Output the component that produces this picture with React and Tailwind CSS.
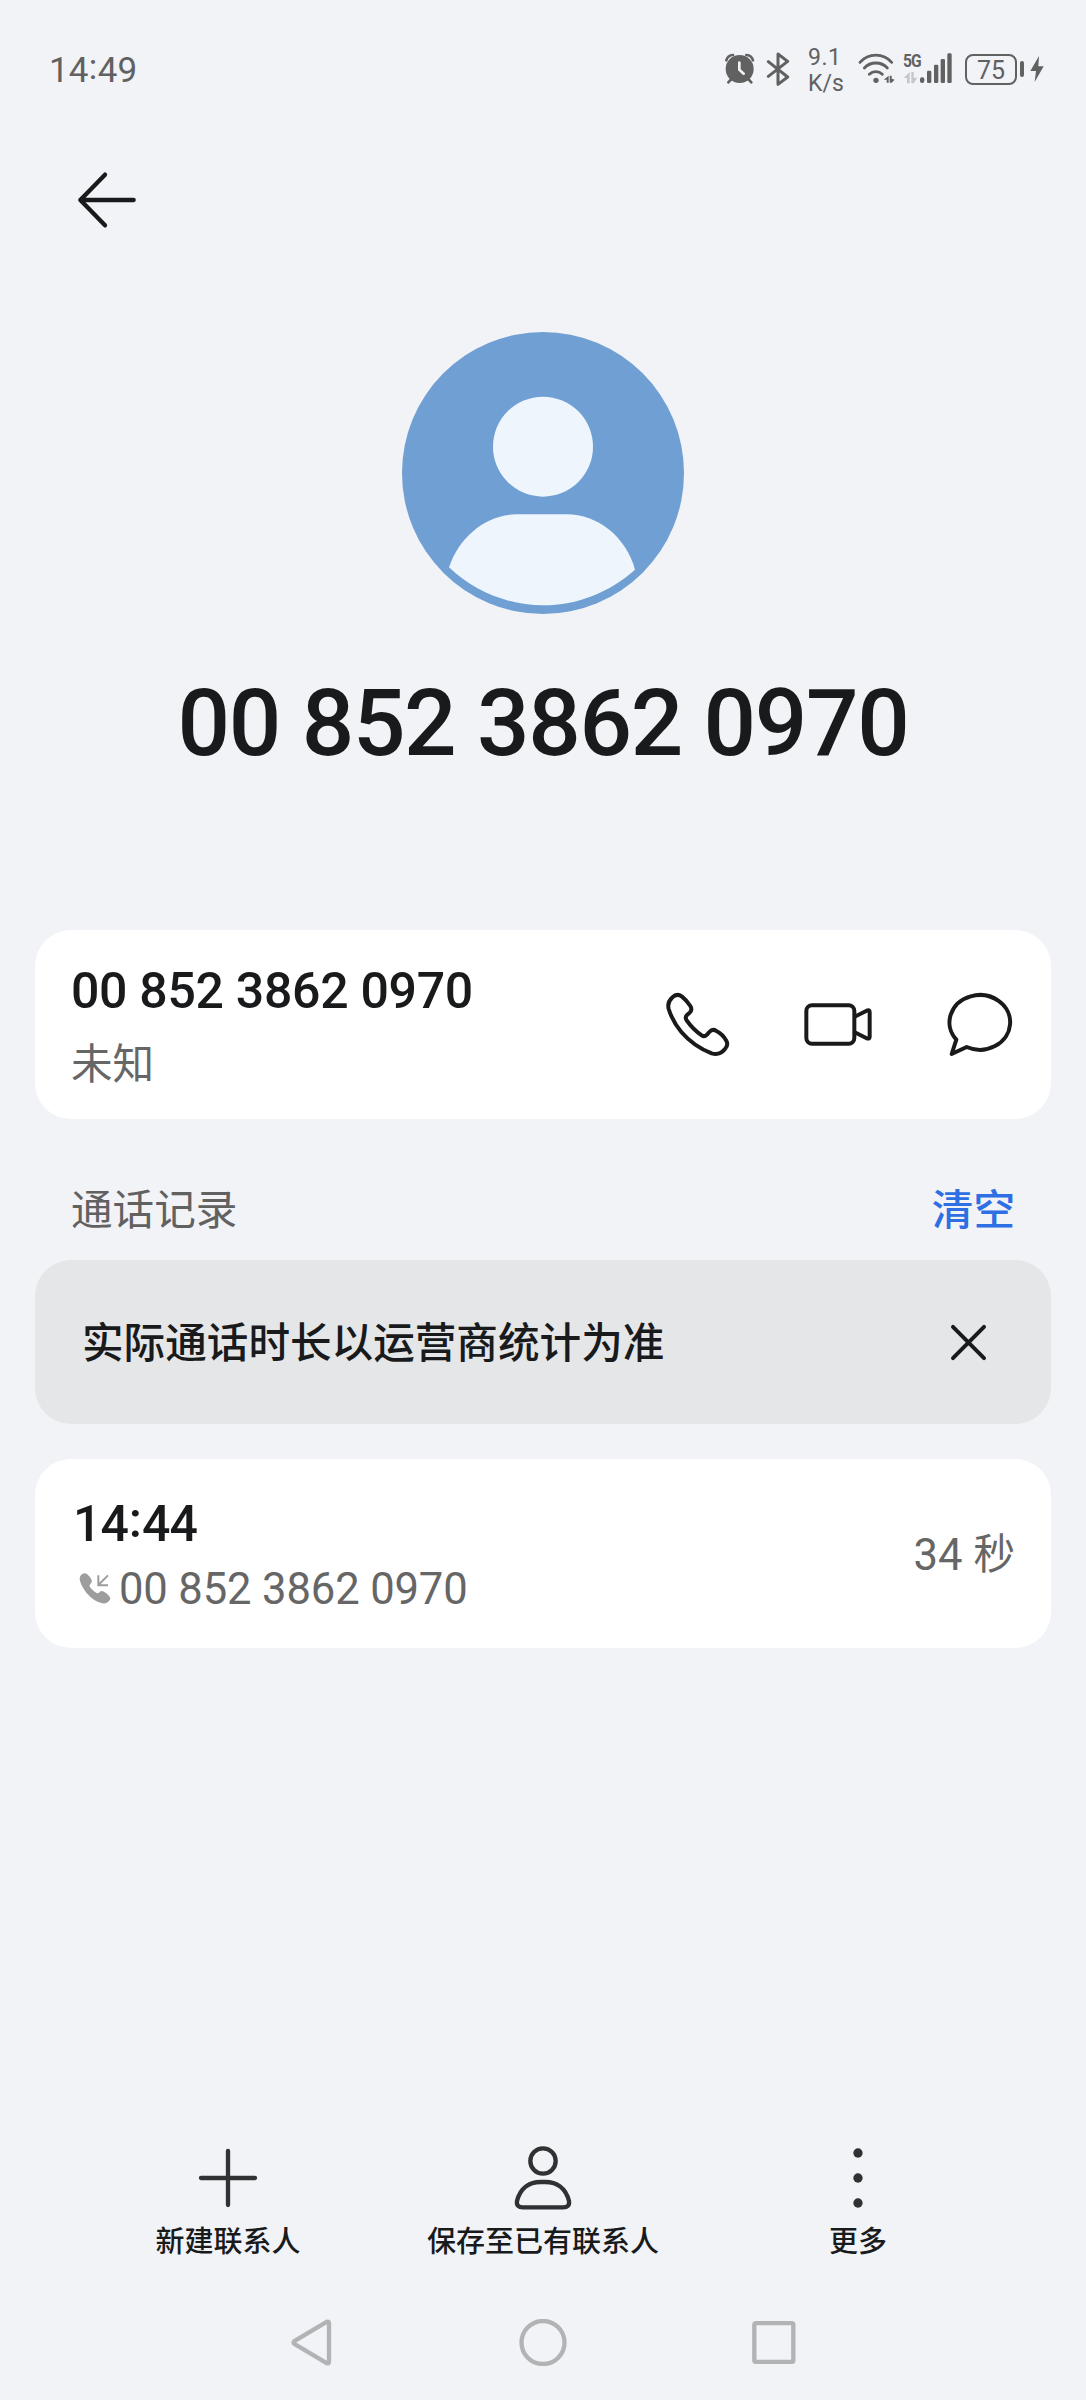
import React from "react";

const PHONE_NUMBER = "00 852 3862 0970";

const AlarmIcon = () => (
  <svg viewBox="0 0 96 102" className="w-8 h-[34px]" fill="none" stroke="currentColor" strokeLinecap="round">
    <circle cx="47" cy="51" r="42" fill="currentColor" stroke="none" />
    <path d="M7 25Q11 10 27 9M87 25Q83 10 67 9" strokeWidth="8" />
    <path d="M13 91l12-13M82 91L70 78" strokeWidth="8" />
    <path d="M46 32v21l13 12" stroke="#f1f3f7" strokeWidth="8" />
  </svg>
);

const BluetoothIcon = () => (
  <svg viewBox="0 0 72 102" className="w-6 h-[34px]" fill="none" stroke="currentColor" strokeWidth="9" strokeLinecap="round" strokeLinejoin="round">
    <path d="M7 29L65 75L36 97V6L65 28L7 73" />
  </svg>
);

const WifiIcon = () => (
  <svg viewBox="0 0 114 102" className="w-[38px] h-[34px]" fill="none" stroke="currentColor" strokeWidth="8.5" strokeLinecap="round">
    <path d="M6 31A63 63 0 0 1 101 31" />
    <path d="M19 48A47 47 0 0 1 88 48" />
    <path d="M34 67A28 28 0 0 1 73 67" />
    <circle cx="54" cy="85" r="8" fill="currentColor" stroke="none" />
    <path d="M92 71v21h-6v-9h-9zM95 71h6v9l9 3l-9 9h-6z" fill="currentColor" stroke="none" />
  </svg>
);

const SignalBars = () => (
  <svg viewBox="0 0 102 102" className="w-[34px] h-[34px]" fill="currentColor">
    <rect x="3" y="76" width="13" height="17" rx="6" />
    <rect x="24" y="56" width="13" height="37" rx="4" />
    <rect x="45" y="38" width="13" height="55" rx="4" />
    <rect x="65" y="21" width="13" height="72" rx="4" />
    <rect x="85" y="4" width="13" height="89" rx="4" />
  </svg>
);

const StatusBar = () => (
  <div className="h-[138px] flex items-center text-[#616161]">
    <div className="ml-[49px] mt-[2px] text-[35px] leading-none">
      14<span className="relative -top-[3px] mx-[0.5px]">:</span>49
    </div>
    <div className="ml-auto mr-[42px] flex items-center">
      <AlarmIcon />
      <div className="ml-[10px]"><BluetoothIcon /></div>
      <div className="ml-[18px] mt-[3px] w-[36px] text-[23px] leading-[26px] whitespace-nowrap">
        <div className="tracking-[0.5px]">9.1</div>
        <div>K/s</div>
      </div>
      <div className="ml-[14px]"><WifiIcon /></div>
      <div className="ml-[7px] w-4 h-[34px] flex flex-col justify-between">
        <div className="origin-top-left scale-x-[0.82] text-[19px] leading-[17px] font-bold tracking-[-1px] whitespace-nowrap">5G</div>
        <svg viewBox="0 0 45 36" className="w-[15px] h-3 mb-[2px]" fill="#c6c7c9">
          <path d="M20 0v34h-8V18H2zM25 0h7v17h11L32 34h-7z" />
        </svg>
      </div>
      <SignalBars />
      <div className="ml-[12px] w-[52px] h-[31px] border-[2.5px] border-[#616161] rounded-[8px] flex items-center justify-center text-[25px] leading-none">
        <span className="mt-[2px]">75</span>
      </div>
      <div className="ml-[3px] w-1 h-4 rounded-sm bg-[#616161]" />
      <svg viewBox="0 0 42 84" className="ml-[6px] w-[14px] h-7" fill="currentColor">
        <path d="M27 3L1 48h17L14 81L41 34H25z" />
      </svg>
    </div>
  </div>
);

const Avatar = () => (
  <svg viewBox="66 66 846 846" className="w-[282px] h-[282px]">
    <circle cx="489" cy="489" r="423" fill="#709fd3" />
    <circle cx="489" cy="410" r="150" fill="#eff5fc" />
    <path d="M408 613H560C652 613 738 680 765 779C690 846 592 886 489 886C386 886 284 845 207 772C237 680 320 613 408 613Z" fill="#eff5fc" />
  </svg>
);

const CallIcon = () => (
  <svg viewBox="132 240 198 204" className="w-[66px] h-[68px]" fill="none" stroke="#191a1b" strokeWidth="12" strokeLinejoin="round">
    <path d="M156 263Q171 248 186 260Q200 271 211 288Q218 299 209 308L201 315Q194 322 200 331Q218 357 245 376Q253 382 261 374L268 366Q277 356 288 362Q308 372 319 392Q326 405 315 417Q299 437 275 430Q222 410 184 366Q158 335 146 297Q141 277 156 263Z" />
  </svg>
);

const VideoIcon = () => (
  <svg viewBox="549 240 213 204" className="w-[71px] h-[68px]" fill="none" stroke="#191a1b" strokeWidth="12" strokeLinejoin="round">
    <rect x="562" y="286" width="144" height="115" rx="17" />
    <path d="M707 320L743 302Q752 298 752 306V380Q752 388 743 385L707 367" />
  </svg>
);

const MessageIcon = () => (
  <svg viewBox="978 240 204 204" className="w-[68px] h-[68px]" fill="none" stroke="#191a1b" strokeWidth="12" strokeLinejoin="round">
    <path d="M1012 389A91 82 0 1 1 1043 411L998 432Z" />
  </svg>
);

const IncomingIcon = () => (
  <svg viewBox="177 425 96 99" className="w-8 h-[33px]" fill="#9d9d9d">
    <path d="M183 434Q191 425 201 431Q211 439 215 449Q218 456 211 461Q206 466 210 471Q219 482 230 488Q235 490 239 485Q244 479 252 484Q263 489 270 501Q273 508 265 514Q258 521 247 519Q221 513 199 487Q183 467 179 447Q178 440 183 434Z" />
    <path d="M264 435L235 464M235 435V465H264" fill="none" stroke="#9d9d9d" strokeWidth="6" />
  </svg>
);

const ACTIONS = [
  {
    label: "新建联系人",
    icon: <path d="M90 21v162M9 102h162" strokeWidth="13" strokeLinecap="round" />,
  },
  {
    label: "保存至已有联系人",
    icon: (
      <>
        <circle cx="90" cy="51" r="38" strokeWidth="13" />
        <path d="M30 190Q9 190 12 171C22 131 50 114 83 114H97C130 114 158 131 168 171Q171 190 150 190Z" strokeWidth="13" />
      </>
    ),
  },
  {
    label: "更多",
    icon: (
      <g fill="#303132" stroke="none">
        <circle cx="90" cy="27" r="14" />
        <circle cx="90" cy="102" r="14" />
        <circle cx="90" cy="177" r="14" />
      </g>
    ),
  },
];

const NAV_ICONS = [
  <path key="back" d="M25 66Q20 70 25 74L122 132Q129 135 129 127V13Q129 5 122 8Z" />,
  <circle key="home" cx="75" cy="70" r="64.5" />,
  <rect key="recent" x="13" y="12" width="117" height="116" rx="5" />,
];

export default function App() {
  return (
    <div className="w-[1086px] h-[2400px] bg-[#f1f3f7] text-[#191a1b] flex flex-col overflow-hidden font-['Roboto','Noto_Sans_CJK_SC',sans-serif]">
      <StatusBar />

      <div className="h-[194px] pl-[76px] pt-[32px]">
        <svg viewBox="168 420 186 180" className="w-[62px] h-[60px]" fill="none" stroke="#191a1b" strokeWidth="13" strokeLinecap="round" strokeLinejoin="round">
          <path d="M255 434L181 510L255 586M181 510H341" />
        </svg>
      </div>

      {/* Contact header */}
      <div className="h-[598px] flex flex-col items-center">
        <Avatar />
        <h1 className="mt-[64px] text-[92.5px] leading-[92px] font-medium tracking-[-1.35px] whitespace-nowrap">{PHONE_NUMBER}</h1>
      </div>

      <div className="mx-[35px] h-[189px] rounded-[36px] bg-white flex">
        <div className="ml-[36px] pt-[31px]">
          <div className="text-[50px] leading-[60px] font-medium tracking-[-0.3px]">{PHONE_NUMBER}</div>
          <div className="mt-[14px] text-[41.6px] leading-[60px] text-[#666]">未知</div>
        </div>
        <div className="ml-auto mr-[38px] mb-[1px] flex items-center gap-[72px]">
          <CallIcon />
          <VideoIcon />
          <MessageIcon />
        </div>
      </div>

      <div className="mx-[71px] h-[141px] pt-[62px] flex justify-between text-[41.6px] leading-[60px]">
        <span className="text-[#616161]">通话记录</span>
        <span className="font-medium text-[#2f6fe4]">清空</span>
      </div>

      <div className="mx-[35px] h-[164px] rounded-[36px] bg-[#e5e6e8] flex items-center justify-between pl-[47px] pr-[64px]">
        <span className="pt-1 text-[41.6px] leading-[60px] font-medium">实际通话时长以运营商统计为准</span>
        <svg viewBox="269 250 112 112" className="w-[37px] h-[37px]" fill="none" stroke="#191a1b" strokeWidth="12" strokeLinecap="round">
          <path d="M278 259L372 353M372 259L278 353" />
        </svg>
      </div>

      <div className="mx-[35px] mt-[35px] h-[189px] rounded-[36px] bg-white flex justify-between">
        <div className="ml-[38px] pt-[35px]">
          <div className="text-[50px] leading-[60px] font-medium tracking-[-1px]">
            14<span className="relative -top-1 mx-[1px]">:</span>44
          </div>
          <div className="mt-[6px] ml-[6px] flex items-center text-[43.6px] leading-[60px] tracking-[-0.15px] text-[#666]">
            <div className="-mt-[3px]"><IncomingIcon /></div>
            <span className="ml-[8px]">{PHONE_NUMBER}</span>
          </div>
        </div>
        <div className="mr-[36px] pt-[4px] flex items-center text-[41.6px] text-[#666]">
          <span className="text-[43.6px]">34&nbsp;</span>秒
        </div>
      </div>

      {/* Bottom actions */}
      <div className="mt-auto mx-auto grid grid-cols-3 w-[945px] h-[172px]">
        {ACTIONS.map(({ label, icon }) => (
          <div key={label} className="flex flex-col items-center">
            <svg viewBox="0 0 180 204" className="-mt-[3px] w-[60px] h-[68px]" fill="none" stroke="#303132">
              {icon}
            </svg>
            <span className="mt-[10px] text-[29px] leading-[40px] font-medium whitespace-nowrap">{label}</span>
          </div>
        ))}
      </div>

      <div className="mx-auto w-[695px] h-[81px] grid grid-cols-3 justify-items-center">
        {NAV_ICONS.map((icon, i) => (
          <svg key={i} viewBox="0 0 150 140" className="w-[50px] h-[47px]" fill="none" stroke="#b2b3b5" strokeWidth="13" strokeLinejoin="round">
            {icon}
          </svg>
        ))}
      </div>
    </div>
  );
}
